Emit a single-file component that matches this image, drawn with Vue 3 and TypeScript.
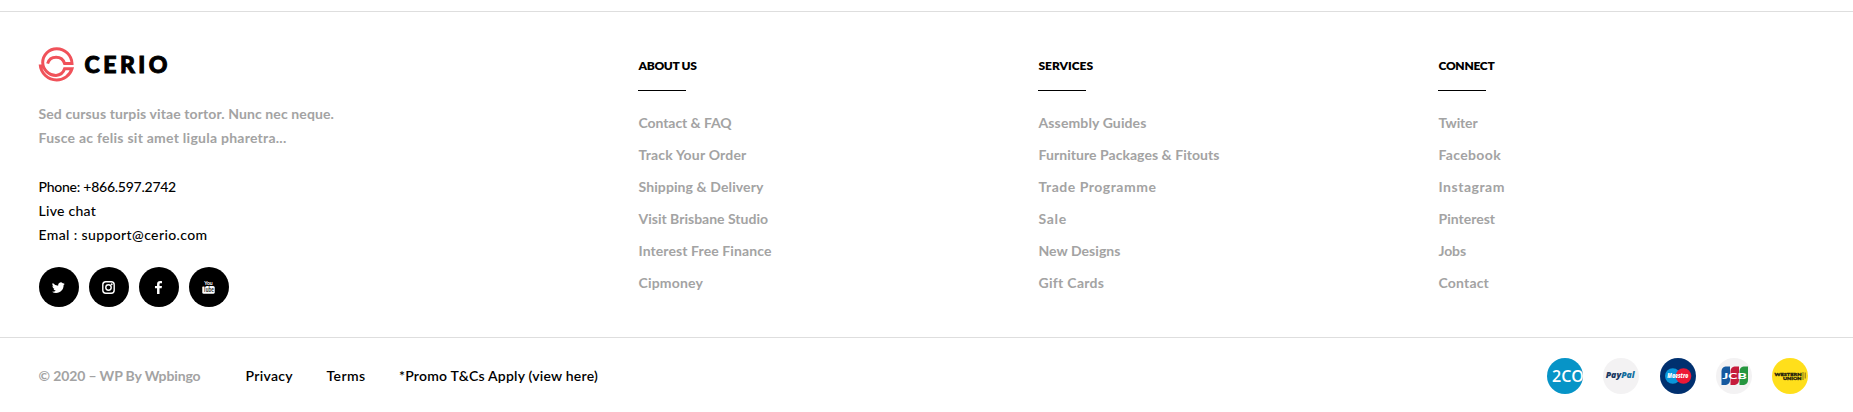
<script setup lang="ts">
import type { Directive } from 'vue'

interface TextItem { text: string; width: number }
interface Column { title: TextItem; links: TextItem[] }

const t = (text: string, width: number): TextItem => ({ text, width })

// Tracks a line of text so that it occupies the given width.
const vTrack: Directive<HTMLElement, number> = {
  mounted(el, { value }) {
    const natural = el.getBoundingClientRect().width
    const count = el.textContent?.length ?? 1
    el.style.letterSpacing = `${(value - natural) / count}px`
  },
}

const intro = [t('Sed cursus turpis vitae tortor. Nunc nec neque.', 295.5), t('Fusce ac felis sit amet ligula pharetra...', 248)]
const contact = [t('Phone: +866.597.2742', 137.5), t('Live chat', 57.5), t('Emal : support@cerio.com', 169)]
const columns: Column[] = [
  {
    title: t('ABOUT US', 58),
    links: [t('Contact & FAQ', 93), t('Track Your Order', 108), t('Shipping & Delivery', 125), t('Visit Brisbane Studio', 129.5), t('Interest Free Finance', 133), t('Cipmoney', 64.5)],
  },
  {
    title: t('SERVICES', 54.5),
    links: [t('Assembly Guides', 108), t('Furniture Packages & Fitouts', 181), t('Trade Programme', 118), t('Sale', 28.5), t('New Designs', 82), t('Gift Cards', 65.5)],
  },
  {
    title: t('CONNECT', 56),
    links: [t('Twiter', 39), t('Facebook', 62.5), t('Instagram', 66.5), t('Pinterest', 56.5), t('Jobs', 27.5), t('Contact', 50.5)],
  },
]
const legal = [t('Privacy', 47.5), t('Terms', 39), t('*Promo T&Cs Apply (view here)', 199)]
</script>

<template>
  <footer class="footer">
    <div class="main">
      <section class="brand">
        <svg class="logo" width="140" height="38" viewBox="0 0 140 38" role="img" aria-label="Cerio">
          <g fill="none" stroke="#f0525a" stroke-width="3">
            <path d="M10.600 17.600 A8.900 8.900 0 0 1 27.600 17.500 H35 A15.300 15.300 0 0 0 19.700 2.700 A14 14 0 0 0 5.700 16.500 A13.300 13.300 0 0 0 19 29.400 A9.600 9.600 0 0 0 27.600 22.800 H35 A16 16 0 0 1 19.700 34 A16.500 16.500 0 0 1 3.200 18.500" />
          </g>
          <text x="47.500" y="26.700" textLength="83" lengthAdjust="spacing">CERIO</text>
        </svg>
        <div class="intro"><p v-for="l in intro" :key="l.text"><span v-track="l.width">{{ l.text }}</span></p></div>
        <div class="contact"><p v-for="l in contact" :key="l.text"><span v-track="l.width">{{ l.text }}</span></p></div>
        <div class="social">
          <a aria-label="Twitter"><svg viewBox="0 0 24 24"><path d="M23.6 4.9a9.500 9.500 0 0 1-2.800.800 4.800 4.800 0 0 0 2.100-2.700 9.500 9.500 0 0 1-3.100 1.200 4.850 4.850 0 0 0-8.300 4.400A13.800 13.800 0 0 1 1.500 3.500a4.850 4.850 0 0 0 1.500 6.500 4.800 4.800 0 0 1-2.200-.600c0 2.400 1.700 4.400 3.900 4.900a4.900 4.900 0 0 1-2.200.1 4.850 4.850 0 0 0 4.500 3.400A9.800 9.800 0 0 1 0 19.800a13.800 13.800 0 0 0 7.500 2.200c9.100 0 14.300-7.700 13.900-14.600a10 10 0 0 0 2.200-2.500z" /></svg></a>
          <a aria-label="Instagram"><svg viewBox="0 0 24 24"><g fill="none" stroke="#fff" stroke-width="2.600"><rect x="1.500" y="1.500" width="21" height="21" rx="5.500" /><circle cx="12" cy="12" r="5" /></g><circle cx="18" cy="6" r="1.700" /></svg></a>
          <a aria-label="Facebook"><svg viewBox="0 0 24 24"><path d="M18.500.3v4h-2.400c-1.800 0-2.200.9-2.200 2.200v2.700h4.500l-.6 4.300h-3.900V24H9.300V13.500H5.500V9.200h3.800V6c0-3.900 2.300-6 5.800-6 1.600 0 3 .1 3.400.3z" /></svg></a>
          <a aria-label="YouTube"><svg class="youtube" viewBox="0 0 13 14"><text x="2.200" y="5.200" textLength="8.500" lengthAdjust="spacingAndGlyphs" class="you">You</text><rect x=".3" y="6" width="12.400" height="7.800" rx="1.600" /><text x="1.300" y="12.300" textLength="10.500" lengthAdjust="spacingAndGlyphs" class="tube">Tube</text></svg></a>
        </div>
      </section>
      <nav v-for="c in columns" :key="c.title.text" class="column">
        <h2><span v-track="c.title.width">{{ c.title.text }}</span></h2>
        <ul>
          <li v-for="l in c.links" :key="l.text"><a v-track="l.width">{{ l.text }}</a></li>
        </ul>
      </nav>
    </div>
    <div class="bottom">
      <span class="copyright"><span v-track="162">© 2020 – WP By Wpbingo</span></span>
      <div class="legal"><a v-for="l in legal" :key="l.text" v-track="l.width">{{ l.text }}</a></div>
      <div class="payments">
        <svg viewBox="0 0 36 36" aria-label="2Checkout"><defs><clipPath id="disc"><circle cx="18" cy="18" r="18" /></clipPath></defs><circle cx="18" cy="18" r="18" fill="#0794c7" /><g clip-path="url(#disc)"><text x="5" y="24" class="two" textLength="32" lengthAdjust="spacingAndGlyphs">2CO</text></g></svg>
        <svg viewBox="0 0 36 36" aria-label="PayPal"><circle cx="18" cy="18" r="18" fill="#f3f2f3" /><text x="2.700" y="20" class="paypal" textLength="29" lengthAdjust="spacingAndGlyphs"><tspan fill="#17375f">Pay</tspan><tspan fill="#12709f">Pal</tspan></text></svg>
        <svg viewBox="0 0 36 36" aria-label="Maestro"><circle cx="18" cy="18" r="18" fill="#00306f" /><circle cx="12.800" cy="18" r="7.800" fill="#0997dc" /><circle cx="23.500" cy="18" r="7.800" fill="#ed1836" /><text x="7.300" y="20" class="maestro" textLength="21" lengthAdjust="spacingAndGlyphs">Maestro</text></svg>
        <svg viewBox="0 0 36 36" aria-label="JCB"><circle cx="18" cy="18" r="18" fill="#f3f2f3" /><path d="M9.500 8.500H14V22a5 5 0 0 1-4 5H5.500V13a5 5 0 0 1 4-4.500z" fill="#15599f" /><path d="M18.500 8.500H23V22a5 5 0 0 1-4 5h-4.500V13a5 5 0 0 1 4-4.500z" fill="#c51b3b" /><path d="M27.500 8.500H32V22a5 5 0 0 1-4 5h-4.500V13a5 5 0 0 1 4-4.500z" fill="#26963f" /><text x="6.300" y="20.700" class="jcb" textLength="24.500" lengthAdjust="spacingAndGlyphs">JCB</text></svg>
        <svg viewBox="0 0 36 36" aria-label="Western Union"><circle cx="18" cy="18" r="18" fill="#ffdf1b" /><text x="2.500" y="17.500" class="western" textLength="27" lengthAdjust="spacingAndGlyphs">WESTERN</text><text x="11" y="21.700" class="western" textLength="18.500" lengthAdjust="spacingAndGlyphs">UNION</text><path d="M31 14v8M33.200 14.500v6" stroke="#4d4515" stroke-width=".7" /></svg>
      </div>
    </div>
  </footer>
</template>

<style>
body { margin: 0; background: #fff; }
</style>

<style scoped>
.footer { box-sizing: border-box; height: 412px; padding-top: 11px; overflow: hidden; font: 600 14px/24px Lato, "Open Sans", sans-serif; color: #000; }
p, h2, ul { margin: 0; padding: 0; }
p { height: 24px; white-space: nowrap; }
.main { box-sizing: border-box; height: 326px; border-top: 1px solid #dedede; padding-left: 38px; display: grid; grid-template-columns: 600px 400px 400px 400px; }
.brand { padding-top: 34px; }
.logo { display: block; margin-left: -1px; }
.logo text { font: 900 23px Lato, sans-serif; fill: #000; stroke: #000; stroke-width: 1px; }
.intro { margin-top: 18px; padding-left: .5px; color: #a3a3a3; font-weight: 700; }
.contact { margin-top: 25px; padding-left: .5px; font-weight: 500; }
.social { display: flex; gap: 10px; margin-top: 20px; padding-left: 1px; }
.social a { width: 40px; height: 40px; border-radius: 50%; background: #000; display: flex; align-items: center; justify-content: center; }
.social svg { width: 13px; height: 13px; margin-right: 1px; fill: #fff; }
.social .youtube { height: 14px; overflow: visible; }
.you { font: 700 6px Lato, sans-serif; }
.tube { font: 700 6.500px Lato, sans-serif; fill: #222; }
.column { padding-top: 41px; white-space: nowrap; }
h2 { box-sizing: border-box; height: 38px; font-size: 12px; line-height: 25px; font-weight: 800; padding-left: .5px; }
h2::after { content: ""; display: block; width: 48px; height: 1px; margin: 12px 0 0 -.5px; background: #000; }
ul { list-style: none; margin-top: 16px; padding-left: .5px; }
li { height: 32px; line-height: 32px; color: #a3a3a3; font-weight: 700; }
.bottom { box-sizing: border-box; height: 75px; border-top: 1px solid #dedede; padding: 2px 45px 0 38.500px; display: flex; align-items: center; white-space: nowrap; }
.copyright { width: 207px; color: #a3a3a3; font-weight: 700; }
.legal { display: flex; gap: 33.500px; }
.payments { display: flex; gap: 20.250px; margin-left: auto; }
.payments svg { width: 36px; height: 36px; }
.two { font: 600 17px "Open Sans", sans-serif; fill: #fff; }
.paypal { font: italic 800 8px "Open Sans", sans-serif; }
.maestro { font: italic 800 6px "Open Sans", sans-serif; fill: #fff; }
.jcb { font: 900 8px Lato, sans-serif; fill: #fff; }
.western { font: 900 4.500px Lato, sans-serif; fill: #28240c; stroke: #28240c; stroke-width: .35px; }
</style>
